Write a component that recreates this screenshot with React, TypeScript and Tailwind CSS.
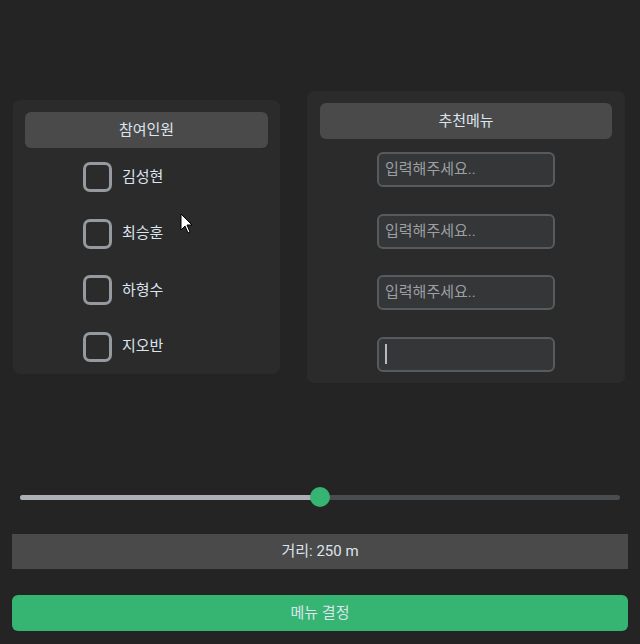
import { useState } from "react"

const people = ["김성현", "최승훈", "하형수", "지오반"]

const font = { fontFamily: "Roboto, 'Noto Sans CJK KR', sans-serif" }

function Checkbox({ label }: { label: string }) {
  return (
    <div className="flex items-center gap-[10px] h-[30px]">
      <div className="w-[29px] h-[30px] rounded-[7px] border-[3px] border-[#949a9f] box-border" />
      <span className="text-[15px] text-[#dce4ee]">{label}</span>
    </div>
  )
}

function MenuInput({ focused }: { focused?: boolean }) {
  return (
    <div className="relative w-[178px] h-[35px] rounded-[6px] border-2 border-[#565b5e] bg-[#343638] box-border flex items-center pl-[6px]">
      {focused ? (
        <div className="w-[2px] h-[20px] bg-[#b5b9bd]" />
      ) : (
        <span className="text-[15px] text-[#9c9fa3]">입력해주세요..</span>
      )}
    </div>
  )
}

export default function App() {
  const [distance] = useState(250)
  const pct = 50

  return (
    <div className="relative w-[640px] h-[644px] bg-[#242424] overflow-hidden flex flex-col" style={font}>
      {/* Frames */}
      <div className="flex items-center pt-[91px] pl-[13px] gap-[27px]">
        {/* 참여인원 */}
        <div className="w-[267px] h-[274px] bg-[#2b2b2b] rounded-[7px] flex flex-col px-[12px] pt-[12px]">
          <div className="h-[36px] rounded-[6px] bg-[#4a4a4a] flex items-center justify-center text-[15px] text-[#dce4ee]">
            참여인원
          </div>
          <div className="flex flex-col gap-[26.5px] pl-[58px] mt-[14px]">
            {people.map((p) => (
              <Checkbox key={p} label={p} />
            ))}
          </div>
        </div>

        {/* 추천메뉴 */}
        <div className="w-[318px] h-[292px] bg-[#2b2b2b] rounded-[7px] flex flex-col px-[13px] pt-[12px]">
          <div className="h-[36px] rounded-[6px] bg-[#4a4a4a] flex items-center justify-center text-[15px] text-[#dce4ee]">
            추천메뉴
          </div>
          <div className="flex flex-col items-center gap-[26.5px] mt-[13px]">
            <MenuInput />
            <MenuInput />
            <MenuInput />
            <MenuInput focused />
          </div>
        </div>
      </div>

      {/* Slider */}
      <div className="relative mt-[104px] mx-[20px] h-[20px] flex items-center">
        <div className="w-full h-[5px] rounded-full bg-[#4a4d50] flex">
          <div className="h-full rounded-full bg-[#aab0b5]" style={{ width: `${pct}%` }} />
        </div>
        <div className="absolute top-0 left-[290px] w-[20px] h-[20px] rounded-full bg-[#36b572]" />
      </div>

      {/* Distance */}
      <div className="mt-[27px] mx-[12px] h-[35px] bg-[#4a4a4a] flex items-center justify-center text-[15px] text-[#dce4ee]">
        거리: {distance} m
      </div>

      {/* Button */}
      <button className="mt-[26px] mx-[12px] h-[36px] rounded-[6px] bg-[#36b572] text-[15px] text-[#dce4ee]">
        메뉴 결정
      </button>

      {/* mouse pointer */}
      <svg className="absolute left-[180px] top-[213px]" width="14" height="22" viewBox="0 0 14 22">
        <path d="M1 1 L1 17 L5 13 L8 20 L10 19 L7 12 L12 12 Z" fill="#fff" stroke="#000" strokeWidth="1" />
      </svg>
    </div>
  )
}
